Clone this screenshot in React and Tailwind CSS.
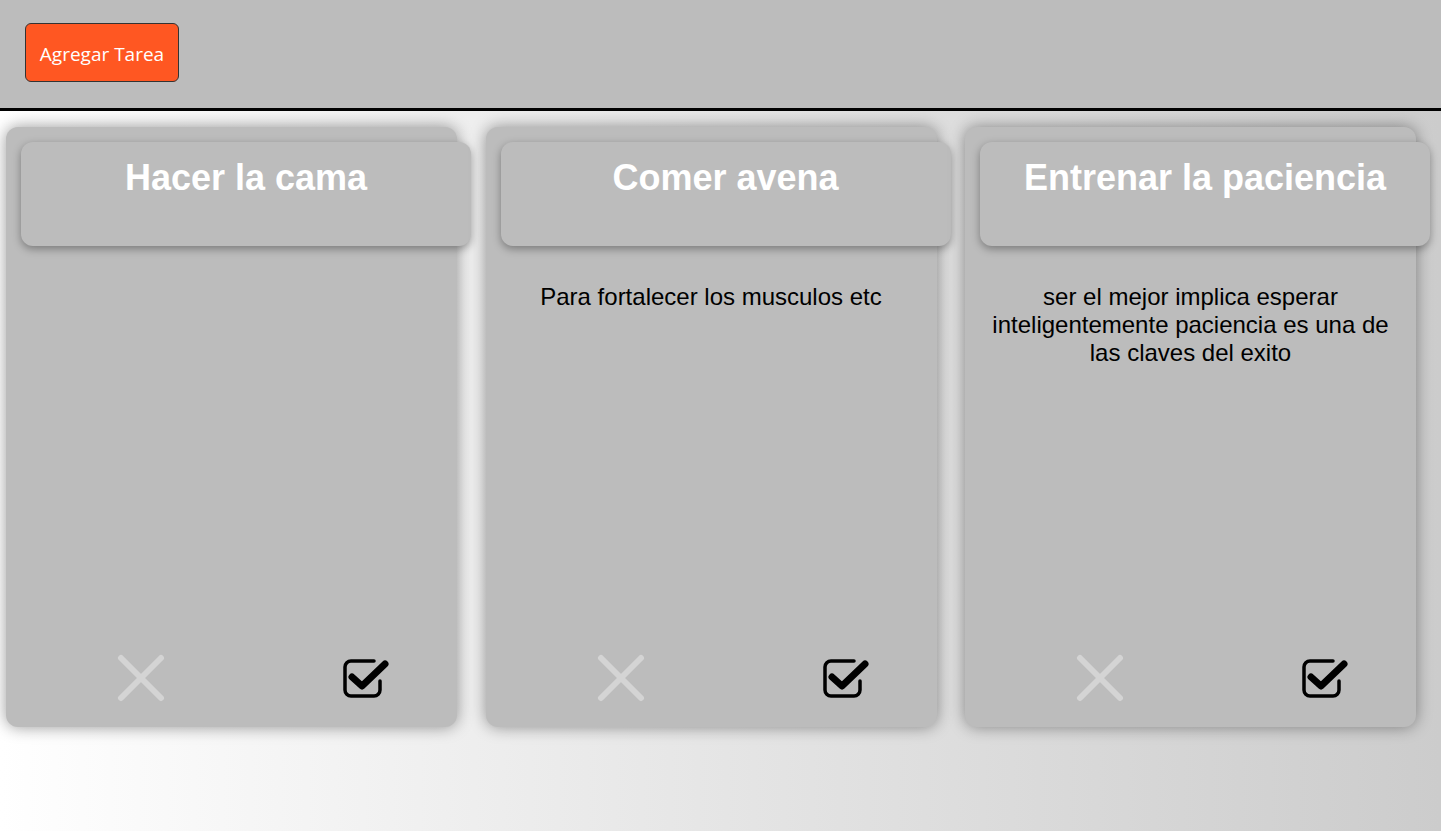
const tasks = [
  { title: 'Hacer la cama', desc: '' },
  { title: 'Comer avena', desc: 'Para fortalecer los musculos etc' },
  { title: 'Entrenar la paciencia', desc: 'ser el mejor implica esperar inteligentemente paciencia es una de las claves del exito' },
]

function CheckBoxIcon() {
  return (
    <svg width="46" height="40" viewBox="0 0 46 40" fill="none">
      <path d="M31 3 H8 a6 6 0 0 0 -6 6 v23 a6 6 0 0 0 6 6 h23 a6 6 0 0 0 6 -6 v-9" stroke="#000" strokeWidth="3.5" strokeLinecap="round" />
      <path d="M9 19 L19 28 L42 6" stroke="#000" strokeWidth="7" strokeLinecap="round" strokeLinejoin="round" />
    </svg>
  )
}

function XIcon() {
  return (
    <svg width="48" height="48" viewBox="0 0 48 48" fill="none">
      <path d="M4 4 L44 44 M44 4 L4 44" stroke="#d4d4d4" strokeWidth="6" strokeLinecap="round" />
    </svg>
  )
}

function TaskCard({ title, desc }) {
  return (
    <div className="flex flex-col w-[451px] h-[600px] shrink-0 bg-[#bcbcbc] rounded-xl shadow-[0_0_16px_rgba(0,0,0,0.4)]">
      <div className="ml-[15px] mt-[15px] w-[450px] h-[104px] shrink-0 bg-[#bcbcbc] rounded-xl shadow-[0_3px_8px_rgba(0,0,0,0.35)] pt-[15px] text-center">
        <h2 className="font-['Liberation_Sans',Arial,sans-serif] font-bold text-[36px] leading-[41px] text-white">{title}</h2>
      </div>
      <p className="flex-1 mt-[37px] px-[20px] text-center font-['Liberation_Sans',Arial,sans-serif] text-[24px] leading-[28px] text-black">
        {desc}
      </p>
      <div className="flex items-center pl-[111px] pb-[25px] gap-[178px]">
        <XIcon />
        <CheckBoxIcon />
      </div>
    </div>
  )
}

export default function App() {
  return (
    <div className="min-h-[831px] bg-gradient-to-r from-white to-[#cccccc]">
      <header className="h-[111px] bg-[#bcbcbc] border-b-[3px] border-black flex items-start pt-[23px] pl-[25px]">
        <button className="w-[154px] h-[59px] pt-[3px] bg-[#ff5722] border border-[#333] rounded-md text-white font-['Open_Sans',sans-serif] text-[19px]">
          Agregar Tarea
        </button>
      </header>
      <main className="flex gap-[28.5px] pl-[6px] pt-[16px]">
        {tasks.map((t) => (
          <TaskCard key={t.title} title={t.title} desc={t.desc} />
        ))}
      </main>
    </div>
  )
}
